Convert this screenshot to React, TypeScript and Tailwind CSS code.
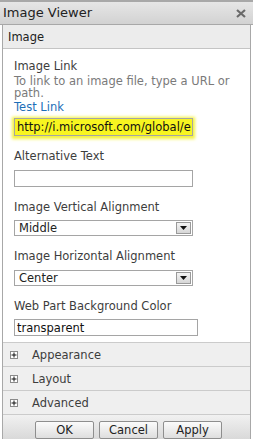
import React from "react";

const font = { fontFamily: '"DejaVu Sans", Verdana, sans-serif' };

function Label({ children }: { children: React.ReactNode }) {
  return <div className="text-[11.5px] leading-[14px] text-[#3d3d3d]">{children}</div>;
}

function SelectBox({ value, mt }: { value: string; mt: string }) {
  return (
    <div className={`${mt} w-[179px] h-[16px] border border-[#a5a5a5] bg-white flex items-center justify-between`}>
      <span className="pl-[4px] text-[11.5px] leading-[14px] text-[#222]">{value}</span>
      <div className="mr-[1px] w-[15px] h-[12px] border border-[#9a9a9a] bg-gradient-to-b from-[#f4f4f4] to-[#d6d6d6] flex items-center justify-center">
        <svg width="7" height="4" viewBox="0 0 7 4">
          <path d="M0 0H7L3.5 4Z" fill="#111" />
        </svg>
      </div>
    </div>
  );
}

function Collapsed({ label }: { label: string }) {
  return (
    <div className="h-[24px] bg-[#efefef] border-b border-[#cbcbcb] flex items-center">
      <div className="ml-[7px] w-[8px] h-[8px] border border-[#8a8a8a] bg-white flex items-center justify-center">
        <svg width="6" height="6" viewBox="0 0 6 6">
          <path d="M3 0.5V5.5M0.5 3H5.5" stroke="#111" strokeWidth="1" />
        </svg>
      </div>
      <span className="ml-[14px] text-[11.5px] leading-[14px] text-[#3d3d3d]">{label}</span>
    </div>
  );
}

function Button({ label }: { label: string }) {
  return (
    <div className="w-[59px] h-[18px] rounded-[2px] border border-[#8e8e8e] bg-gradient-to-b from-[#fbfbfb] to-[#dedede] flex items-center justify-center text-[11.5px] leading-[14px] text-[#222]">
      {label}
    </div>
  );
}

export default function App() {
  return (
    <div className="w-[253px] h-[439px] bg-white flex flex-col overflow-hidden" style={font}>
      <div className="h-[25px] shrink-0 border-t-2 border-[#8c8c8c] bg-gradient-to-b from-[#e6e6e6] to-[#d2d2d2] flex items-center justify-between pl-[3px] pr-[7px] border-b border-[#a8a8a8]">
        <span className="text-[13px] leading-[16px] text-[#222]">Image Viewer</span>
        <svg width="10" height="9" viewBox="0 0 10 9">
          <path d="M1 1L9 8M9 1L1 8" stroke="#6a6a6a" strokeWidth="2.2" />
        </svg>
      </div>
      <div className="mx-[2px] flex-1 flex flex-col border-l border-r border-[#a8a8a8]">
        <div className="h-[24px] shrink-0 bg-[#ececec] border-b border-[#c4c4c4] flex items-center pl-[5px]">
          <span className="text-[11.5px] leading-[14px] text-[#222]">Image</span>
        </div>
        <div className="pl-[11px] pt-[10px] pb-[6px] border-b border-[#cbcbcb] shrink-0">
          <Label>Image Link</Label>
          <div className="mt-[3px] text-[11.5px] leading-[11.5px] text-[#7a7a7a] pr-[8px]">
            To link to an image file, type a URL or path.
          </div>
          <div className="mt-[2px] text-[11.5px] leading-[12px] text-[#1d6fb8]">Test Link</div>
          <div className="mt-[5px] w-[179px] h-[18px] border border-[#a5a5a5] bg-[#f8f520] shadow-[0_1px_3px_2px_#f4f23c] overflow-hidden whitespace-nowrap flex items-center">
            <span className="pl-[2px] text-[11.5px] leading-[14px] text-[#111]">http://i.microsoft.com/global/e</span>
          </div>
          <div className="mt-[13px]">
            <Label>Alternative Text</Label>
          </div>
          <div className="mt-[7px] w-[179px] h-[17px] border border-[#a5a5a5] bg-white" />
          <div className="mt-[13px]">
            <Label>Image Vertical Alignment</Label>
          </div>
          <SelectBox value="Middle" mt="mt-[6px]" />
          <div className="mt-[13px]">
            <Label>Image Horizontal Alignment</Label>
          </div>
          <SelectBox value="Center" mt="mt-[7px]" />
          <div className="mt-[13px]">
            <Label>Web Part Background Color</Label>
          </div>
          <div className="mt-[6px] w-[184px] h-[17px] border border-[#a5a5a5] bg-white flex items-center">
            <span className="pl-[2px] text-[11.5px] leading-[14px] text-[#111]">transparent</span>
          </div>
        </div>
        <Collapsed label="Appearance" />
        <Collapsed label="Layout" />
        <Collapsed label="Advanced" />
        <div className="flex-1 bg-gradient-to-b from-[#f1f1f1] to-[#d9d9d9] flex items-start justify-center gap-[5px] pt-[6px] pl-[4px]">
          <Button label="OK" />
          <Button label="Cancel" />
          <Button label="Apply" />
        </div>
      </div>
    </div>
  );
}
